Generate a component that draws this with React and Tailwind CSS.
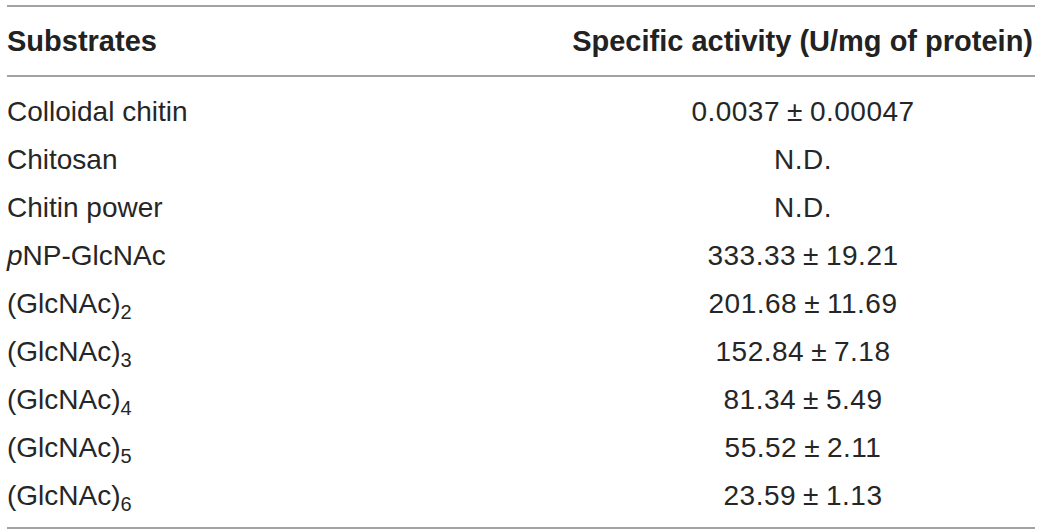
var ROWS = [
  { name: 'Colloidal chitin', value: ['0.0037', '0.00047'] },
  { name: 'Chitosan', value: 'N.D.' },
  { name: 'Chitin power', value: 'N.D.' },
  { name: 'pNP', value: ['333.33', '19.21'] },
  { name: 'G2', sub: '2', value: ['201.68', '11.69'] },
  { name: 'G3', sub: '3', value: ['152.84', '7.18'] },
  { name: 'G4', sub: '4', value: ['81.34', '5.49'] },
  { name: 'G5', sub: '5', value: ['55.52', '2.11'] },
  { name: 'G6', sub: '6', value: ['23.59', '1.13'] },
]

function Name({ row }) {
  if (row.name === 'pNP') {
    return <span><i>p</i>NP-GlcNAc</span>
  }
  if (row.sub) {
    return <span>(GlcNAc)<sub className="text-[20px] bottom-[-0.3em]">{row.sub}</sub></span>
  }
  return <span>{row.name}</span>
}

function Value({ v }) {
  if (typeof v === 'string') return <span>{v}</span>
  return (
    <span>
      {v[0]}<span className="px-[7px]">{'\u00b1'}</span>{v[1]}
    </span>
  )
}

export default function App() {
  return (
    <div className="w-[1041px] h-[532px] bg-white pt-[5px] pl-[7px]" style={{ fontFamily: '"Liberation Sans", Arial, sans-serif' }}>
      <div className="w-[1028px] text-[#222222]">
        <div className="flex items-center h-[72px] border-t-2 border-b-2 border-[#a3a3a3] font-bold text-[29px] leading-none">
          <div className="flex-1">Substrates</div>
          <div className="w-[464px] text-right pr-[2px]">Specific activity (U/mg of protein)</div>
        </div>
        <div className="pt-[11px] pb-[7px] border-b-2 border-[#a3a3a3] text-[28px] leading-none text-[#262626]">
          {ROWS.map(function (r, i) {
            return (
              <div key={i} className="flex items-center h-[48px]">
                <div className="flex-1"><Name row={r} /></div>
                <div className="w-[464px] text-center tracking-[0.5px]"><Value v={r.value} /></div>
              </div>
            )
          })}
        </div>
      </div>
    </div>
  )
}
